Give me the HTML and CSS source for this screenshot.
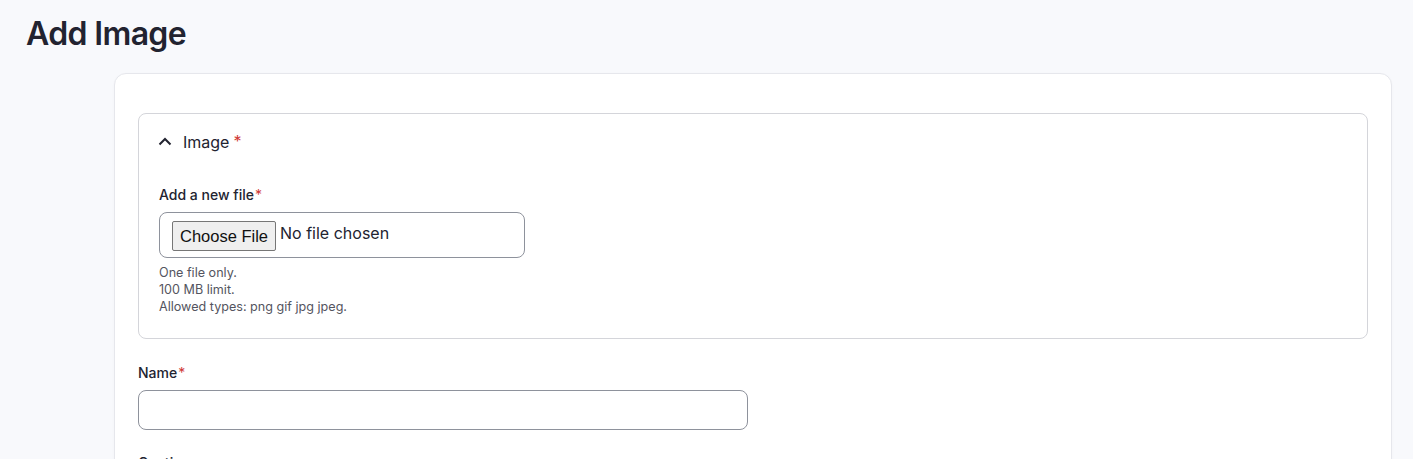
FILE: index.html
```html
<!DOCTYPE html>
<html lang="en">
<head>
<meta charset="utf-8">
<title>Add Image</title>
<link rel="stylesheet" href="styles.css">
</head>
<body>
<header class="page-header">
  <h1 class="page-title">Add Image</h1>
</header>
<main class="layout">
  <form class="card">
    <details class="fieldset" open>
      <summary class="fieldset-summary">
        <svg class="chevron" width="14" height="9" viewBox="0 0 14 9" aria-hidden="true"><path d="M1.5 7.5 7 2l5.5 5.5" fill="none" stroke="#222330" stroke-width="2"/></svg>
        <span class="summary-text">Image</span><span class="req req-lg">*</span>
      </summary>
      <div class="fieldset-body">
        <div class="form-item">
          <label class="form-label">Add a new file<span class="req">*</span></label>
          <label class="file-box">
            <span class="file-button">Choose File</span>
            <span class="file-status">No file chosen</span>
          </label>
          <div class="description">
            <div>One file only.</div>
            <div>100 MB limit.</div>
            <div>Allowed types: png gif jpg jpeg.</div>
          </div>
        </div>
      </div>
    </details>
    <div class="form-item form-item-name">
      <label class="form-label">Name<span class="req">*</span></label>
      <input class="text-input" type="text">
    </div>
    <div class="form-item form-item-caption">
      <label class="form-label">Caption</label>
    </div>
  </form>
</main>
</body>
</html>
```
FILE: styles.css
```css
* { box-sizing: border-box; }
html, body { margin: 0; }
body {
  background: #f8f9fc;
  font-family: Inter, "Noto Sans", sans-serif;
  color: #222330;
  overflow: hidden;
  height: 459px;
}
.page-header {
  padding: 14px 26px 0;
  height: 73px;
}
.page-title {
  margin: 0;
  font-size: 32px;
  line-height: 40px;
  font-weight: 600;
  letter-spacing: -0.02em;
  color: #222330;
}
.layout {
  padding-left: 114px;
  padding-right: 21px;
}
.card {
  background: #fff;
  border: 1px solid #e6e7ec;
  border-radius: 12px;
  padding: 39px 23px 40px;
  box-shadow: 0 1px 3px rgba(0,0,0,0.03);
}
.fieldset {
  border: 1px solid #d4d5da;
  border-radius: 8px;
  margin: 0;
}
.fieldset-summary {
  list-style: none;
  display: flex;
  align-items: center;
  padding: 16px 20px 16px 19px;
  font-size: 16px;
  line-height: 24px;
  cursor: pointer;
}
.fieldset-summary::-webkit-details-marker { display: none; }
.chevron { margin-right: 11px; flex: none; margin-top: -1px; }
.summary-text { color: #222330; }
.req {
  color: #d03a36;
  margin-left: 1px;
  font-size: 14px;
  font-weight: 400;
}
.req-lg { font-size: 16px; margin-left: 4px; align-self: flex-start; line-height: 22px; }
.fieldset-body {
  padding: 16px 20px 23px;
}
.form-item { display: flex; flex-direction: column; align-items: flex-start; }
.form-label {
  font-size: 14px;
  line-height: 18px;
  font-weight: 500;
  margin-bottom: 8px;
  color: #222330;
}
.file-box {
  display: flex;
  align-items: center;
  width: 366px;
  height: 46px;
  border: 1px solid #8e929c;
  border-radius: 8px;
  padding: 0 12px;
  background: #fff;
}
.file-button {
  font-family: "Liberation Sans", Arial, sans-serif;
  font-size: 16.5px;
  line-height: 19px;
  padding: 5px 7px 4px;
  background: #efefef;
  border: 1px solid #767676;
  border-radius: 2px;
  color: #111;
  margin-top: 1px;
}
.file-status {
  font-size: 16px;
  margin-left: 4px;
  margin-top: -4px;
  color: #222330;
}
.description {
  margin-top: 6px;
  font-size: 12.6px;
  line-height: 17px;
  color: #545560;
}
.form-item-name { margin-top: 25px; }
.text-input {
  width: 610px;
  height: 40px;
  border: 1px solid #8e929c;
  border-radius: 8px;
  font: inherit;
  padding: 0 16px;
  margin: 0;
}
.form-item-caption { margin-top: 24px; }
```
